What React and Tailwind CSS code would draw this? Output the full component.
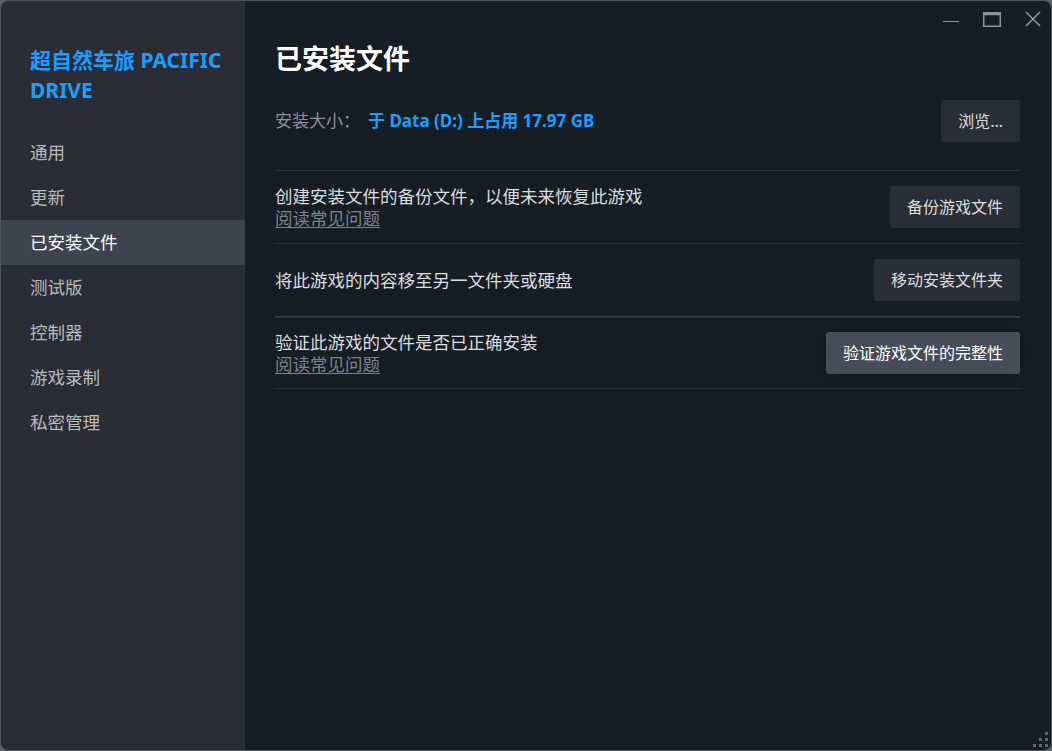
import React from 'react';

const navItems = ['通用', '更新', '已安装文件', '测试版', '控制器', '游戏录制', '私密管理'];

const font = { fontFamily: '"Noto Sans", "Noto Sans CJK SC", sans-serif' };

const ActionRow = ({ text, faq, button, primary, height = 'h-[73px]' }) => (
  <div className={`flex ${height} items-center justify-between border-t border-[#2c313a]`}>
    <div className="flex flex-col leading-[22px]">
      <span className="text-[17.5px] text-[#dcdedf]">{text}</span>
      {faq && <span className="text-[17.5px] text-[#7d8289] underline underline-offset-2">阅读常见问题</span>}
    </div>
    <button
      className={`h-[42px] rounded-[3px] px-[17px] text-[16px] ${
        primary ? 'bg-[#474d58] text-white shadow-[0_0_10px_rgba(0,0,0,0.3)]' : 'bg-[#2a2e37] text-[#dcdedf]'
      }`}
    >
      {button}
    </button>
  </div>
);

const App = () => {
  return (
    <div className="h-[751px] w-[1052px] bg-[#5c636b]" style={font}>
      <div className="flex h-full w-full overflow-hidden rounded-[8px] border border-[#50565e]">
        {/* Sidebar */}
        <aside className="flex w-[244px] shrink-0 flex-col bg-[#2a2d35] pt-[44px]">
          <h2 className="pl-[29px] pr-[8px] text-[21px] font-bold leading-[30px] text-[#1a9fff]">
            超自然车旅 PACIFIC DRIVE
          </h2>
          <nav className="mt-[25px] flex flex-col">
            {navItems.map((item) => (
              <div
                key={item}
                className={`flex h-[45px] items-center px-[29px] text-[17.5px] ${
                  item === '已安装文件' ? 'bg-[#3d4450] text-white' : 'text-[#b8bcbf]'
                }`}
              >
                {item}
              </div>
            ))}
          </nav>
        </aside>

        {/* Main */}
        <main className="relative flex-1 bg-[#171d25] pl-[30px] pr-[31px] pt-[38px]">
          {/* window controls */}
          <div className="absolute right-[10px] top-[10px] flex items-center gap-[24px] text-[#8b929a]">
            <svg width="16" height="16" viewBox="0 0 16 16"><path d="M0 10.5h16" stroke="currentColor" strokeWidth="1.2" /></svg>
            <svg width="18" height="16" viewBox="0 0 18 16" fill="none" stroke="currentColor">
              <rect x="0.75" y="1.75" width="16.5" height="13.5" strokeWidth="1.5" />
              <path d="M0.75 3h16.5" strokeWidth="2.5" />
            </svg>
            <svg width="16" height="16" viewBox="0 0 16 16" fill="none" stroke="currentColor" strokeWidth="1.6">
              <path d="M1 1l14 14M15 1L1 15" />
            </svg>
          </div>

          <h1 className="text-[27px] font-bold leading-[40px] text-white">已安装文件</h1>

          <div className="mt-[21px] flex items-center justify-between pb-[28px]">
            <div className="text-[17px]">
              <span className="text-[#8b929a]">安装大小：</span>
              <span className="ml-[8px] font-bold text-[#1a9fff]">于 Data (D:) 上占用 17.97 GB</span>
            </div>
            <button className="h-[42px] rounded-[3px] bg-[#2a2e37] px-[17px] text-[16px] text-[#dcdedf]">浏览...</button>
          </div>

          <ActionRow text="创建安装文件的备份文件，以便未来恢复此游戏" faq button="备份游戏文件" />
          <ActionRow text="将此游戏的内容移至另一文件夹或硬盘" button="移动安装文件夹" />
          <div className="border-t border-[#3a3f48]">
            <ActionRow text="验证此游戏的文件是否已正确安装" faq button="验证游戏文件的完整性" primary height="h-[71px]" />
          </div>
          <div className="border-t border-[#2c313a]" />

          {/* resize grip */}
          <div className="absolute bottom-[3px] right-[3px] grid grid-cols-3 gap-[3px]">
            {[0, 0, 1, 0, 1, 1, 1, 1, 1].map((v, i) => (
              <div key={i} className={`h-[3px] w-[3px] ${v ? 'bg-[#5c636b]' : ''}`} />
            ))}
          </div>
        </main>
      </div>
    </div>
  );
};

export default App;
